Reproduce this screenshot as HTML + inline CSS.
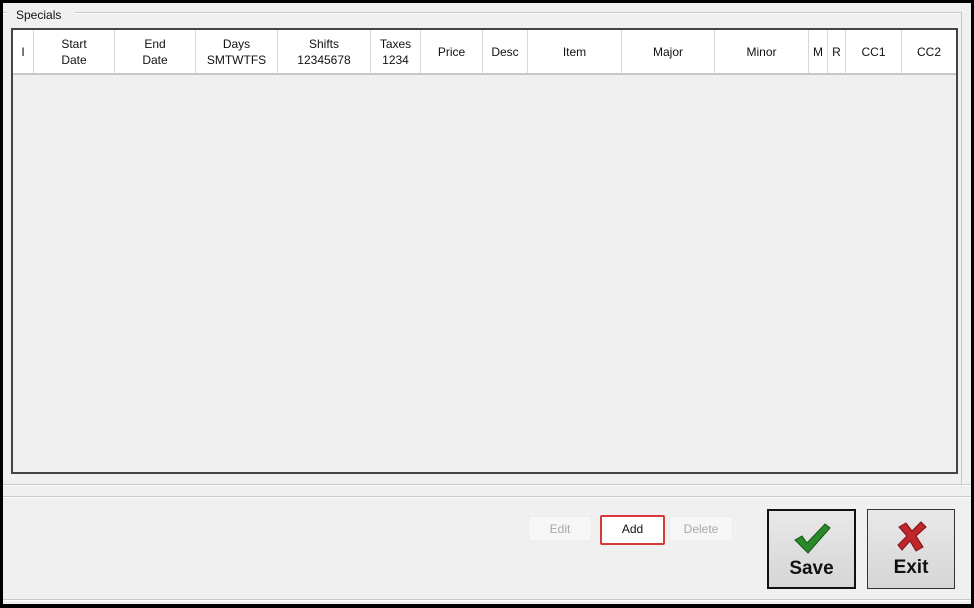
<!DOCTYPE html>
<html><head><style>
body{margin:0;width:974px;height:608px;background:#000;position:relative;overflow:hidden;font-family:"Liberation Sans",Arial,sans-serif;}
#win{position:absolute;left:3px;top:3px;width:968px;height:601px;background:#f0f0f0;}
.abs{position:absolute}
.hl{position:absolute;height:1px;background:#c8c8c8;border-bottom:1px solid #fff}
.col{position:absolute;top:0;height:43px;display:flex;align-items:center;justify-content:center;text-align:center;font-size:12px;line-height:16px;color:#111;border-right:1px solid #d8d8d8;box-sizing:border-box}
.btn{position:absolute;font-size:12px;display:flex;align-items:center;justify-content:center;box-sizing:border-box;border-radius:2px}
.big{position:absolute;background:linear-gradient(#e8e8e8,#d6d6d6);box-sizing:border-box;font-weight:bold;font-size:19px;color:#111;text-align:center}
</style></head><body>
<div id="win">
<div class="hl" style="left:0;top:9px;width:4px"></div>
<div class="abs" style="left:13px;top:5px;font-size:12px;color:#111">Specials</div>
<div class="hl" style="left:72px;top:9px;width:886px"></div>
<div class="abs" style="left:958px;top:9px;width:1px;height:475px;background:#c8c8c8"></div>
<div class="abs" style="left:8px;top:25px;width:947px;height:446px;border:2px solid #444;box-sizing:border-box;background:#f0f0f0">
 <div class="abs" style="left:0;top:0;width:943px;height:43px;background:#fff;border-bottom:2px solid #c8c8c8">
  <div class="col" style="left:0;width:21px">I</div>
  <div class="col" style="left:21px;width:81px">Start<br>Date</div>
  <div class="col" style="left:102px;width:81px">End<br>Date</div>
  <div class="col" style="left:183px;width:82px">Days<br>SMTWTFS</div>
  <div class="col" style="left:265px;width:93px">Shifts<br>12345678</div>
  <div class="col" style="left:358px;width:50px">Taxes<br>1234</div>
  <div class="col" style="left:408px;width:62px">Price</div>
  <div class="col" style="left:470px;width:45px">Desc</div>
  <div class="col" style="left:515px;width:94px">Item</div>
  <div class="col" style="left:609px;width:93px">Major</div>
  <div class="col" style="left:702px;width:94px">Minor</div>
  <div class="col" style="left:796px;width:19px">M</div>
  <div class="col" style="left:815px;width:18px">R</div>
  <div class="col" style="left:833px;width:56px">CC1</div>
  <div class="col" style="left:889px;width:54px;border-right:none">CC2</div>
 </div>
</div>
<div class="hl" style="left:0;top:481px;width:968px"></div>
<div class="hl" style="left:0;top:493px;width:968px"></div>
<div class="hl" style="left:0;top:596px;width:968px"></div>
<div class="btn" style="left:525px;top:513px;width:64px;height:25px;background:#f6f6f6;color:#a8a8a8;border:1px solid #ececec">Edit</div>
<div class="btn" style="left:597px;top:512px;width:65px;height:30px;background:#fff;color:#111;border:2px solid #d9383b;padding-bottom:3px">Add</div>
<div class="btn" style="left:666px;top:513px;width:64px;height:25px;background:#f6f6f6;color:#a8a8a8;border:1px solid #ececec">Delete</div>
<div class="big" style="left:764px;top:506px;width:89px;height:80px;border:2px solid #111">
 <svg width="40" height="34" viewBox="0 0 40 34" style="position:absolute;left:23px;top:10px"><path d="M3 19 L10 15 L15 22 L33 3 L38 7 L16 32 Z" fill="#2a8a2a" stroke="#145514" stroke-width="1"/></svg>
 <div style="position:absolute;left:0;right:0;top:47px">Save</div>
</div>
<div class="big" style="left:864px;top:506px;width:88px;height:80px;border:1px solid #333">
 <svg width="34" height="34" viewBox="0 0 34 34" style="position:absolute;left:27px;top:9px"><path d="M4 8 L11 4 L17 12 L26 3 L31 8 L21 17 L28 28 L21 32 L15 22 L7 31 L3 26 L12 17 Z" fill="#c0262a" stroke="#7a1015" stroke-width="1"/></svg>
 <div style="position:absolute;left:0;right:0;top:47px">Exit</div>
</div>
</div>
</body></html>
